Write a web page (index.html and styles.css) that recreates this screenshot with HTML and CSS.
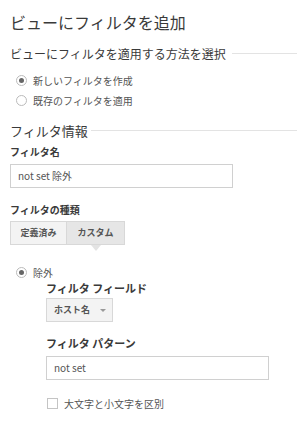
FILE: index.html
```html
<!DOCTYPE html>
<html lang="ja">
<head>
  <meta charset="UTF-8">
  <title>ビューにフィルタを追加</title>
  <link rel="stylesheet" href="styles.css">
</head>
<body>

  <h1 class="title">ビューにフィルタを追加</h1>

  <div class="section-head head-apply">
    <span>ビューにフィルタを適用する方法を選択</span>
    <div class="rule"></div>
  </div>

  <div class="choices">
    <label class="choice"><span class="radio checked"></span>新しいフィルタを作成</label>
    <label class="choice"><span class="radio"></span>既存のフィルタを適用</label>
  </div>

  <div class="section-head head-info">
    <span>フィルタ情報</span>
    <div class="rule"></div>
  </div>

  <div class="field-label first">フィルタ名</div>
  <div class="text-box name-box">not set 除外</div>

  <div class="field-label kind">フィルタの種類</div>
  <div class="tabs">
    <div class="tab">定義済み</div>
    <div class="tab active">カスタム</div>
  </div>

  <!-- custom filter -->
  <label class="choice exclude"><span class="radio checked"></span>除外</label>

  <div class="custom">
    <div class="sub-label">フィルタ フィールド</div>
    <div class="select">ホスト名 <span class="caret"></span></div>

    <div class="sub-label pattern">フィルタ パターン</div>
    <div class="text-box pattern-box">not set</div>

    <label class="check-row"><span class="checkbox"></span>大文字と小文字を区別</label>
  </div>

</body>
</html>
```

FILE: styles.css
```css
body {
  margin: 0;
  padding: 0 0 0 10px;
  background: #fff;
  color: #555;
  font-family: "Noto Sans CJK JP", "Noto Sans", sans-serif;
}

.title {
  margin: 10px 0 0;
  font-size: 16px;
  font-weight: 400;
  line-height: 24px;
  color: #3a3a3a;
}

.section-head {
  display: flex;
  align-items: center;
  height: 20px;
  color: #3a3a3a;
}
.section-head .rule {
  flex: 1;
  height: 1px;
  background: #e3e3e3;
}
.head-apply {
  margin-top: 9px;
  font-size: 12px;
}
.head-apply .rule {
  margin-left: 6px;
}
.head-info {
  margin-top: 10px;
  font-size: 13px;
}
.head-info .rule {
  margin-left: 3px;
}

.choices {
  margin-top: 7px;
}
.choice {
  display: flex;
  align-items: center;
  height: 20px;
  padding-left: 6px;
  font-size: 10px;
  color: #555;
}
.radio {
  width: 9px;
  height: 9px;
  border: 1px solid #bbb;
  border-radius: 50%;
  margin-right: 6px;
  display: flex;
  align-items: center;
  justify-content: center;
}
.radio.checked::after {
  content: "";
  width: 5px;
  height: 5px;
  border-radius: 50%;
  background: #666;
}

.field-label {
  height: 16px;
  line-height: 16px;
  font-size: 10px;
  font-weight: 700;
  color: #3a3a3a;
}
.field-label.first {
  margin-top: 4px;
}
.field-label.kind {
  margin-top: 14px;
}

.text-box {
  box-sizing: border-box;
  height: 24px;
  line-height: 22px;
  border: 1px solid #d0d0d0;
  padding-left: 7px;
  font-size: 10px;
  color: #555;
}
.name-box {
  width: 223px;
  margin-top: 4px;
}

.tabs {
  display: flex;
  margin-top: 3px;
}
.tab {
  box-sizing: border-box;
  height: 24px;
  line-height: 22px;
  width: 57px;
  text-align: center;
  font-size: 9px;
  font-weight: 700;
  color: #555;
  background: #f3f3f3;
  border: 1px solid #d8d8d8;
}
.tab.active {
  position: relative;
  width: 58px;
  background: #e6e6e6;
  border-left: none;
}
.tab.active::after {
  content: "";
  position: absolute;
  left: 24px;
  bottom: -7px;
  border-left: 5px solid transparent;
  border-right: 5px solid transparent;
  border-top: 6px solid #e3e3e3;
}

.exclude {
  margin-top: 19px;
  height: 16px;
}

.custom {
  padding-left: 36px;
}
.sub-label {
  margin-top: 1px;
  height: 14px;
  line-height: 14px;
  font-size: 11px;
  font-weight: 700;
  color: #3a3a3a;
}
.sub-label.pattern {
  margin-top: 13px;
  height: 16px;
  line-height: 16px;
}

.select {
  box-sizing: border-box;
  margin-top: 3px;
  width: 67px;
  height: 24px;
  line-height: 22px;
  padding-left: 7px;
  border: 1px solid #d8d8d8;
  background: #f3f3f3;
  font-size: 9px;
  font-weight: 700;
  color: #555;
  position: relative;
}
.caret {
  position: absolute;
  left: 53px;
  top: 10px;
  border-left: 3px solid transparent;
  border-right: 3px solid transparent;
  border-top: 3px solid #999;
}

.pattern-box {
  width: 223px;
  margin-top: 5px;
}

.check-row {
  display: flex;
  align-items: center;
  margin-top: 15px;
  height: 16px;
  padding-left: 1px;
  font-size: 10px;
  color: #555;
}
.checkbox {
  width: 9px;
  height: 9px;
  border: 1px solid #c4c4c4;
  margin-right: 6px;
}
```
